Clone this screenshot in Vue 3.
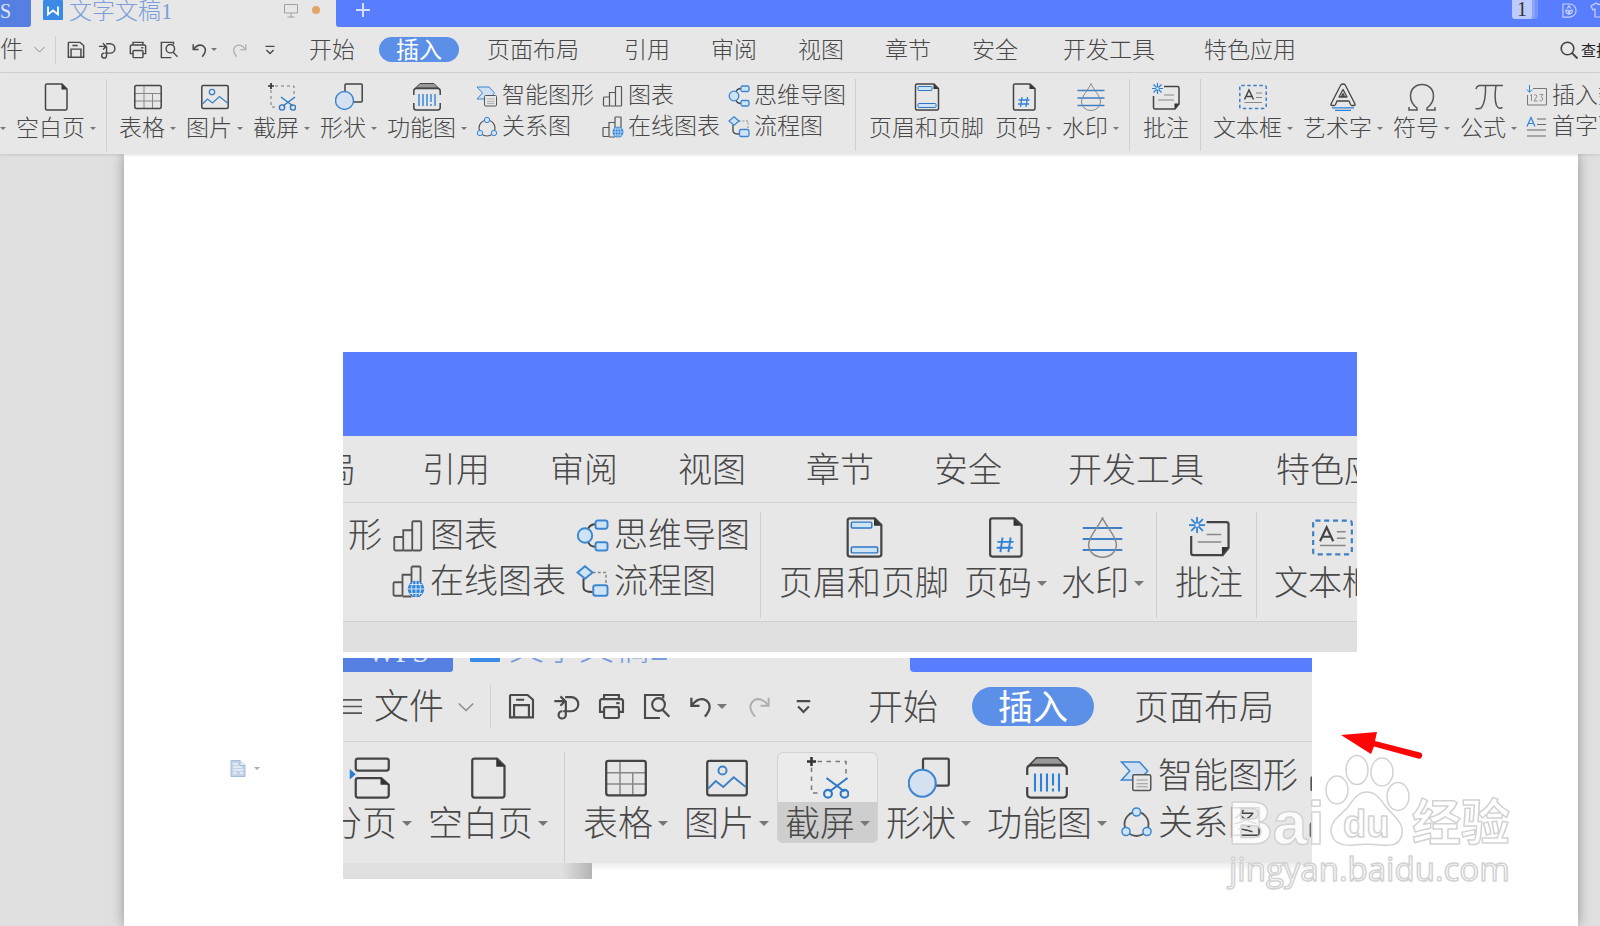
<script setup>
const big = (icon, text, arrow = true, active = false) => ({ kind: 'big', icon, text, arrow, active })
const col = (...rows) => ({ kind: 'col', rows: rows.map(([icon, text]) => ({ icon, text })) })
const sep = { kind: 'sep' }

const smart = col(['smart', '智能图形'], ['relation', '关系图'])
const charts = col(['chart', '图表'], ['online', '在线图表'])
const maps = col(['mind', '思维导图'], ['flow', '流程图'])
const layoutGroup = [big('headfoot', '页眉和页脚', false), big('pagenum', '页码'), big('watermark', '水印'), sep, big('comment', '批注', false), sep, big('textbox', '文本框')]

const mainRibbon = [
  big('break', '分页'), big('page', '空白页'), sep,
  big('table', '表格'), big('image', '图片'), big('capture', '截屏'), big('shapes', '形状'), big('barcode', '功能图'),
  smart, charts, maps, sep, ...layoutGroup,
  big('wordart', '艺术字'), big('omega', '符号'), big('pi', '公式'),
  col(['number', '插入数字'], ['dropcap', '首字下沉']),
]
const upperRibbon = [col(['', '形']), charts, maps, sep, ...layoutGroup]
const lowerRibbon = [
  big('break', '分页'), big('page', '空白页'), sep,
  big('table', '表格'), big('image', '图片'), big('capture', '截屏', true, true), big('shapes', '形状'), big('barcode', '功能图'),
  smart, charts,
]
const bars = { main: mainRibbon, upper: upperRibbon, lower: lowerRibbon }

const mainTabs = ['开始', '插入', '页面布局', '引用', '审阅', '视图', '章节', '安全', '开发工具', '特色应用']
const upperTabs = mainTabs.slice(2)
const lowerTabs = mainTabs.slice(0, 3)
const quick = [
  ['save', '保存'], ['export', '输出'], ['print', '打印'], ['preview', '打印预览'],
]
</script>

<template>
  <svg class="defs" aria-hidden="true">
    <symbol id="i-page" viewBox="0 0 28 28">
      <path d="M5 1h15l5 5v19.500a1.500 1.500 0 0 1-1.500 1.500H5a1.500 1.500 0 0 1-1.500-1.500V2.500A1.500 1.500 0 0 1 5 1z" fill="none" stroke="#444" stroke-width="1.500" />
      <path d="M19.500 1v5.500H25z" fill="#333" />
    </symbol>
    <symbol id="i-break" viewBox="0 0 28 28">
      <g fill="none" stroke="#444" stroke-width="1.500"><rect x="4.500" y="1" width="22" height="8" rx="1.500" /><path d="M6 14h15.500l5 4.500V25.500a1.500 1.500 0 0 1-1.500 1.500H6a1.500 1.500 0 0 1-1.500-1.500v-10A1.500 1.500 0 0 1 6 14z" /></g>
      <path d="M21 14v4.500h5.500z" fill="#333" /><path d="M.5 8l4 3.500-4 3.500z" fill="#2b7cd3" />
    </symbol>
    <symbol id="i-table" viewBox="0 0 28 28">
      <path d="M10 3v22M1 10.500h26M1 18h26M18.500 10.500V25" fill="none" stroke="#888" />
      <rect x=".8" y="2.500" width="26.400" height="23" rx="1.500" fill="none" stroke="#444" stroke-width="1.500" />
    </symbol>
    <symbol id="i-image" viewBox="0 0 28 28">
      <rect x=".8" y="2.500" width="26.400" height="23" rx="1.500" fill="none" stroke="#444" stroke-width="1.500" />
      <g fill="none" stroke="#3c80c8" stroke-width="1.300"><circle cx="11" cy="9" r="2.700" /><path d="M1.500 21l5-5 5 4 7-6.500 8 6.500" /></g>
    </symbol>
    <symbol id="i-capture" viewBox="0 0 28 28">
      <path d="M7 3h19v9M3 7v17h6" fill="none" stroke="#777" stroke-dasharray="3 3" />
      <path d="M3 0v6M0 3h6" fill="none" stroke="#333" stroke-width="1.700" />
      <g fill="none" stroke="#2d78c5" stroke-width="1.400"><path d="M13 14l12 9M27 14l-12 9" /><circle cx="14" cy="24.500" r="2.600" /><circle cx="25" cy="24.500" r="2.600" /></g>
    </symbol>
    <symbol id="i-shapes" viewBox="0 0 28 28">
      <rect x="10" y="1" width="17.200" height="18" rx="1" fill="none" stroke="#444" stroke-width="1.500" />
      <circle cx="9.500" cy="17.500" r="9" fill="#d3e1f1" stroke="#3c86cf" stroke-width="1.400" />
    </symbol>
    <symbol id="i-barcode" viewBox="0 0 28 28">
      <path d="M7 .5h14l4.500 4.500H2.500z" fill="#999" stroke="#444" />
      <path d="M.8 12V8q0-2.500 2.500-2.500h21.400q2.500 0 2.500 2.500v4M.8 20v4.500q0 2.500 2.500 2.500h21.400q2.500 0 2.500-2.500V20" fill="none" stroke="#444" stroke-width="1.500" />
      <path d="M6 11v12M10 11v12M14 11v12M18 11v8M18 21v2M22 11v12" fill="none" stroke="#2d82d8" stroke-width="1.400" />
    </symbol>
    <symbol id="i-headfoot" viewBox="0 0 28 28">
      <path d="M4 1h17l4.500 4.500V25.500A1.500 1.500 0 0 1 24 27H4a1.500 1.500 0 0 1-1.500-1.500v-23A1.500 1.500 0 0 1 4 1z" fill="none" stroke="#444" stroke-width="1.500" />
      <path d="M20.500 1v5h5z" fill="#333" />
      <g fill="#cfe3f7" stroke="#2d78c5"><rect x="5" y="3.500" width="14" height="4" rx=".8" /><rect x="5" y="20.500" width="18" height="4" rx=".8" /></g>
    </symbol>
    <symbol id="i-pagenum" viewBox="0 0 28 28">
      <path d="M5 1h15l5 4.500V25.500a1.500 1.500 0 0 1-1.500 1.500H5a1.500 1.500 0 0 1-1.500-1.500V2.500A1.500 1.500 0 0 1 5 1z" fill="none" stroke="#444" stroke-width="1.500" />
      <path d="M19.500 1v5H25z" fill="#333" />
      <path d="M12 14l-1.500 10M17.500 14L16 24M8.500 17h11M8 21h11" fill="none" stroke="#2d82d8" stroke-width="1.300" />
    </symbol>
    <symbol id="i-watermark" viewBox="0 0 28 28">
      <path d="M.5 7.500h27M.5 15h27M.5 22.500h27" fill="none" stroke="#3c80c8" stroke-width="1.300" />
      <path d="M14 .5C12 6 4.500 13 4.500 19a9.500 8.500 0 0 0 19 0C23.500 13 16 6 14 .5z" fill="none" stroke="#888" />
    </symbol>
    <symbol id="i-comment" viewBox="0 0 28 28">
      <path d="M12 3.500h13.500q1.500 0 1.500 1.500v16l-4 5H3q-1.500 0-1.500-1.500V13" fill="none" stroke="#444" stroke-width="1.500" />
      <path d="M27 20.500h-4.500V26z" fill="#333" /><path d="M12 12h10M6 17h16" fill="none" stroke="#888" />
      <path d="M5.500 0v11M0 5.500h11M1.500 1.500l8 8M9.500 1.500l-8 8" fill="none" stroke="#2d82d8" stroke-width="1.200" />
      <circle cx="5.500" cy="5.500" r="1.300" fill="#e7e7e7" />
    </symbol>
    <symbol id="i-textbox" viewBox="0 0 28 28">
      <rect x=".8" y="2.500" width="26.400" height="23" rx="1.500" fill="none" stroke="#3c80c8" stroke-width="1.500" stroke-dasharray="3.500 2.500" />
      <path d="M5.500 16.500L10 7l4.500 9.500M7 13.500h6" fill="none" stroke="#444" stroke-width="1.500" />
      <path d="M17 10h6M17 14.500h6M5.500 19.500H23" fill="none" stroke="#888" />
    </symbol>
    <symbol id="i-wordart" viewBox="0 0 28 28">
      <path d="M11.500 2.500q.5-1.500 2.500-1.500t2.500 1.500L26 21q.5 1.500-1 1.500h-2q-1 0-1.500-1L20 18H8l-1.500 3.500q-.5 1-1.500 1H3q-1.500 0-1-1.500zM14 6.500L10 14h8zM14 10.500l-1.500 3h3z" fill="none" stroke="#444" stroke-width="1.300" stroke-linejoin="round" />
      <path d="M3 24.800h22M6 27.300h16" fill="none" stroke="#2d82d8" stroke-width="1.300" />
    </symbol>
    <symbol id="i-omega" viewBox="0 0 28 28">
      <path d="M1 24v3h8v-2C5 22 2.500 18 2.500 13 2.500 6 7.500 1.500 14 1.500S25.500 6 25.500 13c0 5-2.500 9-6.500 12v2h8v-3" fill="none" stroke="#555" stroke-width="1.500" />
    </symbol>
    <symbol id="i-pi" viewBox="0 0 28 28">
      <path d="M1 6q1-3.500 4-3.500h23M10.500 2.500q.5 16-4 22-2 2-6 1M21 2.500q-2 13 .5 20 2 4 6 2" fill="none" stroke="#555" stroke-width="1.500" />
    </symbol>
    <symbol id="i-smart" viewBox="0 0 22 22">
      <path d="M1 2h12l5.500 6-5.500 6H1l5.500-6z" fill="#cfe0f2" stroke="#3c86cf" />
      <rect x="8.500" y="10.500" width="12" height="10.500" rx="1" fill="#e7e7e7" stroke="#555" /><path d="M11 14h7.500M11 16.500h7.500M11 18.500h7.500" fill="none" stroke="#999" stroke-width=".7" />
    </symbol>
    <symbol id="i-relation" viewBox="0 0 22 22">
      <circle cx="11" cy="12" r="8" fill="none" stroke="#555" stroke-width="1.200" /><g fill="#cfe3f7" stroke="#3c86cf"><circle cx="11" cy="4" r="2.700" /><circle cx="4" cy="17" r="2.700" /><circle cx="18" cy="17" r="2.700" /></g>
    </symbol>
    <symbol id="i-chart" viewBox="0 0 22 22">
      <g fill="none" stroke="#555" stroke-width="1.200"><rect x="1.500" y="12" width="6" height="9" rx=".8" /><path d="M7.500 12V7.500h6M13.500 21h-6" /><rect x="13.500" y="1.500" width="6" height="19.500" rx=".8" /></g>
    </symbol>
    <symbol id="i-online" viewBox="0 0 22 22">
      <g fill="none" stroke="#555" stroke-width="1.200"><rect x="1" y="11.500" width="6" height="9" rx=".8" /><path d="M7 12V6.500h6M13 21H7" /><rect x="13" y="1" width="6" height="19.500" rx=".8" /></g>
      <circle cx="16" cy="16" r="5.500" fill="#3386db" /><path d="M16 10.500v11M10.500 16h11M12 13h8M12 19h8M14 11.500q-2 4.500 0 9M18 11.500q2 4.500 0 9" fill="none" stroke="#cfe3f7" stroke-width=".7" />
    </symbol>
    <symbol id="i-mind" viewBox="0 0 22 22">
      <path d="M8 7q1-3.500 5-3.500M8 15q1 3.500 5 3.500" fill="none" stroke="#444" stroke-width="1.300" />
      <g fill="#cfe3f7" stroke="#3c86cf" stroke-width="1.300"><circle cx="6" cy="11" r="4.800" /><rect x="13" y="1" width="8" height="5.500" rx="1.500" /><rect x="13" y="15.500" width="8" height="5.500" rx="1.500" /></g>
    </symbol>
    <symbol id="i-flow" viewBox="0 0 22 22">
      <path d="M5 9v6q0 3 6 3" fill="none" stroke="#444" stroke-width="1.300" /><path d="M11 5h9v8" fill="none" stroke="#888" stroke-dasharray="2 1.500" />
      <g fill="#cfe3f7" stroke="#3c86cf" stroke-width="1.300"><path d="M6 .8L11 5 6 9.200 1 5z" /><rect x="11.500" y="13.500" width="9.500" height="7" rx="1.500" /></g>
    </symbol>
    <symbol id="i-number" viewBox="0 0 22 22">
      <path d="M7 3.500h13.500V20H1.500V10" fill="none" stroke="#777" />
      <path d="M4 10.500l1.500-1V16M8 10.500q1-1.500 2.500-.5 1 1.500-.5 3L8 16h3.500M13.500 9.500H17L15 12q2.500.5 1.500 3-1 1.500-3 .5" fill="none" stroke="#888" stroke-width=".9" />
      <path d="M3.500 0v7M.8 4.500l2.700 2.800 2.700-2.800" fill="none" stroke="#2d82d8" />
    </symbol>
    <symbol id="i-dropcap" viewBox="0 0 22 22">
      <path d="M1 10.500L5 1.500l4 9M2.500 7.500h5" fill="none" stroke="#2d82d8" stroke-width="1.200" /><path d="M11 3h9M11 8.500h9M1 14h19M1 20h19" fill="none" stroke="#666" />
    </symbol>
    <symbol id="i-save" viewBox="0 0 20 20">
      <g fill="none" stroke="#4a4a4a" stroke-width="1.600"><path d="M2 1.500h12.500L18.500 5v13H1.500V2z" /><path d="M4.500 18V9h11v9M6 5h6" /></g>
    </symbol>
    <symbol id="i-export" viewBox="0 0 20 20">
      <path d="M1 6h8M5.500 2.500L9 6 5.500 9.500M9 3h4.500a5 5 0 0 1 0 10.500H7.500M9.500 6v10.500a2.700 2.700 0 1 1-2.500-3" fill="none" stroke="#4a4a4a" stroke-width="1.600" />
    </symbol>
    <symbol id="i-print" viewBox="0 0 20 20">
      <g fill="none" stroke="#4a4a4a" stroke-width="1.600"><path d="M4.500 4.500v-3h11v3M4.500 14h-3V5.500l1-1h15l1 1V14h-3" /><rect x="4.500" y="10.500" width="11" height="8" rx="1" /><path d="M13.500 7.500h2.500" /></g>
    </symbol>
    <symbol id="i-preview" viewBox="0 0 20 20">
      <g fill="none" stroke="#4a4a4a" stroke-width="1.600"><path d="M15 4V1.500H1.500v17h11" /><circle cx="11.500" cy="8.500" r="4.700" /><path d="M14.500 12.500l5 5" /></g>
    </symbol>
    <symbol id="i-undo" viewBox="0 0 20 20">
      <path d="M2.500 3.500v6h6M3 9q5-6.500 10.500-3.500 5.500 4.500-1 12" fill="none" stroke="#4a4a4a" stroke-width="1.700" />
    </symbol>
    <symbol id="i-redo" viewBox="0 0 20 20">
      <path d="M17.500 3.500v6h-6M17 9Q12 2.500 6.500 5.500q-5.500 4.500 1 12" fill="none" stroke="#b0b0b0" stroke-width="1.500" />
    </symbol>
    <symbol id="i-more" viewBox="0 0 20 20">
      <path d="M5 6h10M6 10l4 4 4-4" fill="none" stroke="#4a4a4a" stroke-width="1.600" />
    </symbol>
    <symbol id="i-chevron" viewBox="0 0 20 20">
      <path d="M2 6l8 8 8-8" fill="none" stroke="#8a8a8a" stroke-width="1.500" />
    </symbol>
    <symbol id="i-wps" viewBox="0 0 20 20">
      <rect width="20" height="20" rx="1" fill="#3a8ae6" /><path d="M5 6.500v8l5-4 5 4v-8" fill="none" stroke="#fff" stroke-width="1.800" />
    </symbol>
  </svg>

  <div class="app main">
    <header class="titlebar">
      <button class="home-tab">S</button>
      <div class="doc-tab">
        <svg class="doc-logo"><use href="#i-wps" /></svg>
        <span class="doc-name">文字文稿1</span>
        <svg class="monitor" viewBox="0 0 14 14"><path d="M.5.5h13v8.500H.5zM7 9v4M3.500 13h7" fill="none" stroke="#a0a0a0" /></svg>
        <i class="dot"></i>
      </div>
      <div class="blue-bar">
        <button class="new-tab" aria-label="新建"><svg viewBox="0 0 14 14"><path d="M7 0v14M0 7h14" stroke="#d5defc" stroke-width="2" /></svg></button>
        <span class="badge">1</span>
        <svg class="round" viewBox="0 0 16 16"><g fill="none" stroke="#c8d4fb" stroke-width="1.200"><path d="M1 1h7a7 7 0 0 1 0 14H1z" /><path d="M7.500 12.500V7M7.500 12q-4-1-3.500-4.500 3 0 3.500 4.500 0-4 3.500-4.500.5 3.500-3.500 4.500M5.500 6l2-3 2 3" /></g></svg>
        <svg class="shirt" viewBox="0 0 18 16"><path d="M6 1q3 3 6 0l5 3-2 4-2-1v8H5V7L3 8 1 4z" fill="none" stroke="#c8d4fb" stroke-width="1.200" /></svg>
      </div>
    </header>

    <nav class="menu">
      <button class="file">文件</button>
      <svg class="chev"><use href="#i-chevron" /></svg>
      <i class="rule"></i>
      <div class="quick">
        <button v-for="[name, label] in quick" :key="name" :aria-label="label"><svg><use :href="'#i-' + name" /></svg></button>
        <button class="undo" aria-label="撤销"><svg><use href="#i-undo" /></svg><i class="caret"></i></button>
        <button aria-label="恢复"><svg><use href="#i-redo" /></svg></button>
        <button class="more" aria-label="更多"><svg><use href="#i-more" /></svg></button>
      </div>
      <div class="tabs">
        <button v-for="t in mainTabs" :key="t" :class="{ on: t === '插入', wide: t.length > 2 }">{{ t }}</button>
      </div>
      <button class="search"><svg viewBox="0 0 18 18"><circle cx="7.500" cy="7.500" r="6.300" fill="none" stroke="#444" stroke-width="1.600" /><path d="M12 12l5.500 5.500" stroke="#444" stroke-width="1.800" /></svg>查找</button>
    </nav>

    <div class="ribbon">
      <template v-for="(it, n) in bars.main" :key="n">
        <i v-if="it.kind === 'sep'" class="sep"></i>
        <button v-else-if="it.kind === 'big'" class="big" :class="{ plain: !it.arrow }">
          <svg><use :href="'#i-' + it.icon" /></svg>
          <span class="label">{{ it.text }}<i v-if="it.arrow" class="caret"></i></span>
        </button>
        <div v-else class="col">
          <button v-for="r in it.rows" :key="r.text"><svg><use :href="'#i-' + r.icon" /></svg>{{ r.text }}</button>
        </div>
      </template>
    </div>

    <main class="desk">
      <article class="sheet">
        <button class="paste" aria-label="粘贴选项">
          <svg viewBox="0 0 16 17"><path d="M1 .5h9l5 5v11H1z" fill="#c3d2e8" stroke="#a5bbdc" /><path d="M3 4h5M3 7h9M3 10h10M3 13h4M10 13h3" stroke="#fff" stroke-width="1.200" /><path d="M10 .5v5h5" fill="#e8eef8" stroke="#a5bbdc" /></svg>
          <i class="caret"></i>
        </button>

        <figure class="shot upper">
          <div class="band"></div>
          <nav class="menu">
            <div class="tabs"><button v-for="t in upperTabs" :key="t" :class="{ wide: t.length > 2 }">{{ t }}</button></div>
          </nav>
          <div class="ribbon">
            <template v-for="(it, n) in bars.upper" :key="n">
              <i v-if="it.kind === 'sep'" class="sep"></i>
              <button v-else-if="it.kind === 'big'" class="big" :class="{ plain: !it.arrow }">
                <svg><use :href="'#i-' + it.icon" /></svg>
                <span class="label">{{ it.text }}<i v-if="it.arrow" class="caret"></i></span>
              </button>
              <div v-else class="col">
                <button v-for="r in it.rows" :key="r.text"><svg v-if="r.icon"><use :href="'#i-' + r.icon" /></svg>{{ r.text }}</button>
              </div>
            </template>
          </div>
          <div class="foot"></div>
        </figure>

        <div class="anchor">
          <figure class="shot lower">
            <div class="strip">
              <span class="strip-home">WPS</span>
              <svg class="doc-logo"><use href="#i-wps" /></svg>
              <span class="strip-name">文字文稿1</span>
              <span class="strip-blue"></span>
            </div>
            <nav class="menu">
              <svg class="burger" viewBox="0 0 20 20"><path d="M0 3h20M0 10h20M0 17h20" stroke="#555" stroke-width="1.800" /></svg>
              <button class="file">文件</button>
              <svg class="chev"><use href="#i-chevron" /></svg>
              <i class="rule"></i>
              <div class="quick">
                <button v-for="[name, label] in quick" :key="name" :aria-label="label"><svg><use :href="'#i-' + name" /></svg></button>
                <button class="undo" aria-label="撤销"><svg><use href="#i-undo" /></svg><i class="caret"></i></button>
                <button aria-label="恢复"><svg><use href="#i-redo" /></svg></button>
                <button class="more" aria-label="更多"><svg><use href="#i-more" /></svg></button>
              </div>
              <div class="tabs"><button v-for="t in lowerTabs" :key="t" :class="{ on: t === '插入', wide: t.length > 2 }">{{ t }}</button></div>
            </nav>
            <div class="ribbon">
              <template v-for="(it, n) in bars.lower" :key="n">
                <i v-if="it.kind === 'sep'" class="sep"></i>
                <button v-else-if="it.kind === 'big'" class="big" :class="{ active: it.active }">
                  <svg><use :href="'#i-' + it.icon" /></svg>
                  <span class="label">{{ it.text }}<i v-if="it.arrow" class="caret"></i></span>
                </button>
                <div v-else class="col">
                  <button v-for="r in it.rows" :key="r.text"><svg><use :href="'#i-' + r.icon" /></svg>{{ r.text }}</button>
                </div>
              </template>
            </div>
            <div class="foot"><i></i></div>
          </figure>

          <svg class="pointer" viewBox="0 0 84 30"><path d="M0 3L36 0l-2 9L79 20.500a3 3 0 0 1-2 6L33 14.500 30 22z" fill="#fb0505" /></svg>

          <svg class="mark" viewBox="0 0 300 145">
            <g fill="#fff" fill-opacity=".82" stroke="#d2d2d2" stroke-width="1.500" stroke-linejoin="round">
              <text x="8" y="94" class="latin" font-size="62">Bai</text>
              <ellipse cx="117" cy="40" rx="11" ry="14" /><ellipse cx="137" cy="20" rx="11" ry="14.500" /><ellipse cx="162" cy="22" rx="11" ry="14" /><ellipse cx="178" cy="46.500" rx="11" ry="14" />
              <path d="M147 42C156 42 161 50 166 57 174 66 184 73 182 84 180 96 170 96 160 95 151 94 143 94 134 95 123 96 113 94 111 82 110 71 120 66 128 57 133 50 138 42 147 42z" />
              <text x="123" y="87" class="latin" font-size="38">du</text>
              <text x="192" y="90" class="cjk" font-size="49">经验</text>
              <text x="9" y="131" class="url" font-size="33">jingyan.baidu.com</text>
            </g>
          </svg>
        </div>
      </article>
    </main>
  </div>
</template>

<style>
html, body { margin: 0; background: #e0e0e0; overflow: hidden; }
</style>

<style scoped>
.defs { position: absolute; width: 0; height: 0; }
.app {
  display: flex; flex-direction: column; height: 100vh; overflow: hidden; color: #484848;
  font-family: "Liberation Sans", "Noto Sans CJK SC", sans-serif; font-weight: 300;
}
button { font: inherit; color: inherit; background: none; border: 0; padding: 0; margin: 0; white-space: nowrap; flex: none; }
svg { display: block; flex: none; overflow: visible; }
i { display: block; flex: none; }

.main { --text: 23px; --icon: 28px; --small: 22px; --pad: 5px; --plain: 6px; --gap: 5px; --cgap: 4px; --caret: 3px; --top: 6px; --btop: 4px; --lm: 4px; --line: 27px; --row: 31px; --tabpad: 17px; --widepad: 21px; --tabgap: 7px; --pill: 25px; --sl: 5px; --sr: 7px; --q: 18px; --qgap: 13px; --h: 81px; --mh: 45px; }
.upper { --text: 34px; --icon: 41px; --small: 33px; --pad: 7px; --plain: 8px; --gap: 5px; --cgap: 5px; --caret: 5px; --top: 9px; --btop: 5px; --lm: 5px; --line: 40px; --row: 46px; --tabpad: 25px; --widepad: 31px; --tabgap: 10px; --pill: 38px; --sl: 5px; --sr: 10px; --h: 118px; --mh: 66px; }
.lower { --text: 35px; --icon: 42px; --small: 33px; --pad: 8px; --gap: 5px; --cgap: 5px; --caret: 5px; --top: 10px; --btop: 5px; --lm: 5px; --line: 39px; --row: 47px; --tabpad: 26px; --widepad: 32px; --tabgap: 8px; --pill: 39px; --sl: 8px; --sr: 10px; --q: 27px; --qgap: 18px; --h: 121px; --mh: 69px; }

.titlebar { display: flex; flex: none; height: 27px; background: #e7e7e7; }
.home-tab { width: 31px; height: 27px; background: #5580e2; color: #dfe7fb; border-radius: 0 0 3px 0; font-family: "Liberation Serif", serif; font-size: 20px; line-height: 20px; text-align: left; padding-bottom: 6px; }
.doc-tab { display: flex; align-items: flex-start; width: 305px; padding-left: 12px; box-sizing: border-box; }
.doc-logo { width: 20px; height: 20px; }
.doc-name { margin-left: 6px; width: 215px; font-size: 23px; line-height: 24px; color: #7b9edb; font-family: "Liberation Serif", "Noto Sans CJK SC", serif; }
.monitor { width: 14px; height: 14px; margin-top: 4px; }
.dot { width: 8px; height: 8px; margin: 6px 0 0 14px; border-radius: 50%; background: #e2a565; }
.blue-bar { flex: 1; display: flex; align-items: flex-start; background: #587dff; border-radius: 0 0 0 3px; overflow: hidden; }
.new-tab { margin: 3px auto 0 20px; }
.new-tab svg { width: 14px; height: 14px; }
.badge { width: 20px; height: 19px; background: #bccafc; color: #333; font: 20px/19px "Liberation Serif", serif; text-align: center; border-radius: 0 0 3px 3px; box-shadow: 3px 0 #8ba4fc, 6px 0 #7592fd; }
.round { width: 15px; height: 15px; margin: 3px 0 0 30px; }
.shirt { width: 18px; height: 16px; margin: 2px -8px 0 13px; }

.menu { display: flex; align-items: center; height: var(--mh); flex: none; background: #e7e7e7; border-bottom: 1px solid #d2d2d2; font-size: var(--text); }
.file { line-height: calc(var(--row) + 2px); }
.main > .menu .file { margin-left: -23px; }
.chev { width: 13px; height: 13px; margin: 0 9px 0 10px; }
.rule { width: 1px; height: 28px; background: #cfcfcf; }
.quick { display: flex; align-items: center; gap: var(--qgap); margin-left: 11px; }
.quick svg { width: var(--q); height: var(--q); }
.quick .undo { display: flex; align-items: center; gap: 2px; }
.tabs { display: flex; gap: var(--tabgap); }
.tabs button { height: var(--pill); line-height: calc(var(--pill) + 2px); border-radius: 20px; padding: 0 var(--tabpad); }
.tabs .wide { padding: 0 var(--widepad); }
.tabs .on { background: #5c90e8; color: #fff; font-weight: 400; }
.main > .menu > .tabs { margin: 0 auto 0 13px; }
.search { display: flex; align-items: center; gap: 3px; margin-right: -11px; font-size: 15px; font-weight: 400; color: #222; }
.search svg { width: 18px; height: 18px; }

.ribbon { display: flex; align-items: flex-start; height: var(--h); flex: none; background: #e7e7e7; padding-top: var(--top); box-sizing: border-box; font-size: var(--text); overflow: hidden; }
.main > .ribbon { position: relative; z-index: 1; overflow: visible; box-shadow: 0 1px 3px rgba(0, 0, 0, .12); }
.main > .ribbon > :first-child { margin-left: -56px; }
.big { display: flex; flex-direction: column; align-items: center; padding: var(--btop) var(--pad) 0; }
.plain { padding: var(--btop) var(--plain) 0; }
.big svg { width: var(--icon); height: var(--icon); }
.label { display: flex; align-items: center; gap: var(--gap); margin-top: var(--lm); line-height: var(--line); }
.caret { border: var(--caret) solid transparent; border-top-color: #777; border-bottom: 0; }
.sep { width: 1px; align-self: stretch; margin: 0 var(--sr) 3px var(--sl); background: #cfcfcf; }
.col { padding: 1px 4px 0; flex: none; }
.col button { display: flex; align-items: center; gap: var(--cgap); height: var(--row); line-height: var(--row); }
.col svg { width: var(--small); height: var(--small); }

.desk { flex: 1; display: flex; min-height: 0; background: #e0e0e0; padding: 0 22px 0 124px; }
.sheet { position: relative; flex: 1; min-width: 0; background: #fff; padding: 198px 0 0 219px; box-shadow: 0 0 12px rgba(0, 0, 0, .35); }
.paste { position: absolute; left: 106px; top: 606px; display: flex; align-items: center; gap: 8px; }
.paste svg { width: 16px; height: 17px; }
.paste .caret { border-top-color: #aaa; }

.shot { margin: 0; overflow: hidden; max-width: 100%; }
.upper { width: 1014px; background: #e0e0e0; }
.band { height: 84px; background: #587dff; }
.upper .tabs { margin-left: -154px; }
.upper .ribbon { border-bottom: 1px solid #cfcfcf; height: 119px; }
.upper .col { padding: 0 5px; }
.upper .foot { height: 30px; }

.anchor { position: relative; margin-top: 6px; }
.lower { width: 969px; }
.strip { display: flex; align-items: flex-end; height: 14px; overflow: hidden; background: #e7e7e7; }
.strip-home { width: 110px; padding-bottom: 3px; background: #5580e2; color: #dfe7fb; font: 30px/34px "Liberation Serif", serif; text-align: center; border-radius: 0 0 3px 0; }
.strip .doc-logo { width: 30px; height: 30px; margin: 0 9px 10px 17px; }
.strip-name { width: 401px; flex: none; padding-bottom: 7px; font-size: 35px; line-height: 35px; color: #7b9edb; }
.strip-blue { flex: 1; height: 14px; background: #587dff; border-radius: 0 0 0 4px; }
.burger { width: 19px; height: 19px; margin-right: 12px; }
.lower .chev { width: 18px; height: 18px; margin: 0 15px 0 13px; }
.lower .rule { height: 44px; }
.lower .quick { margin-left: 17px; }
.lower .tabs { margin-left: 25px; }
.lower .ribbon > :first-child { margin-left: -24px; }
.lower .sep { margin-bottom: 0; }
.lower .col { padding: 0 6px 0 5px; }
.active { border-radius: 6px; background: linear-gradient(#ebebeb 50px, #cecece 50px); box-shadow: inset 0 0 0 1px #d2d2d2; }
.lower .foot { height: 16px; background: linear-gradient(#ececec, #fff 8px); }
.lower .foot i { width: 249px; height: 16px; background: linear-gradient(90deg, #e0e0e0 88%, #b4b4b4); }

.pointer { position: absolute; left: 998px; top: 74px; width: 84px; height: 30px; }
.mark { position: absolute; left: 877px; top: 92px; width: 300px; height: 145px; }
.mark .latin { font-family: "Liberation Sans", sans-serif; font-weight: 700; }
.mark .cjk { font-family: "Noto Sans CJK SC", sans-serif; font-weight: 700; }
.mark .url { font-family: "Open Sans", sans-serif; font-weight: 400; }
</style>
